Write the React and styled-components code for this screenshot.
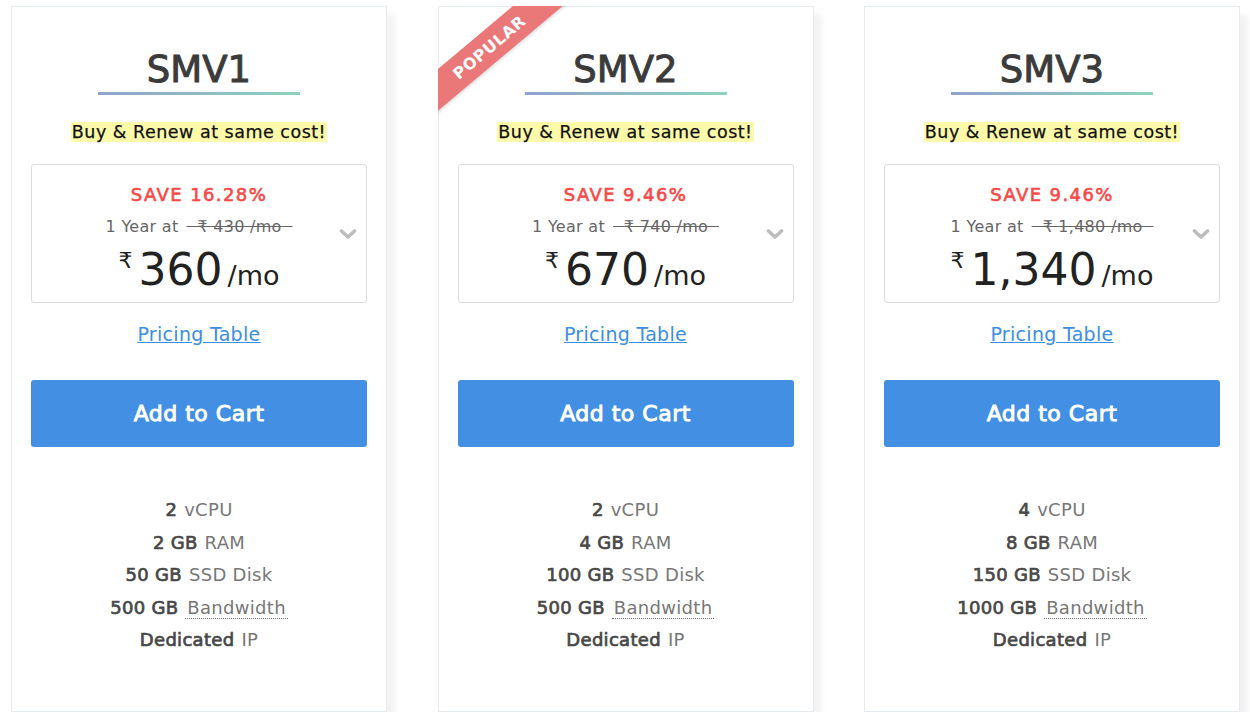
import React from 'react';
import styled, { createGlobalStyle } from 'styled-components';

const GlobalStyle = createGlobalStyle`
  html, body {
    margin: 0;
    padding: 0;
    background: #fff;
  }

  body {
    font-family: "DejaVu Sans", "Liberation Sans", sans-serif;
  }
`

const Page = styled.div`
  display: grid;
  grid-template-columns: repeat(3, 376px);
  column-gap: 50.5px;
  padding: 6px 0 0 11px;
`

const Card = styled.div`
  position: relative;
  box-sizing: border-box;
  height: 706px;
  padding: 41px 19px 0;
  background: #fff;
  border: 1px solid #e5ebf1;
  box-shadow: 8px 8px 6px rgba(0, 0, 0, 0.05);
  display: flex;
  flex-direction: column;
  align-items: center;
`

const RibbonClip = styled.div`
  position: absolute;
  top: -1px;
  left: -1px;
  width: 140px;
  height: 120px;
  overflow: hidden;
  pointer-events: none;
`

const Ribbon = styled.div`
  position: absolute;
  left: -49px;
  top: 25px;
  width: 200px;
  height: 32px;
  background: #ea7878;
  color: #fff;
  transform: rotate(-40deg);
  text-align: center;
  font-size: 16px;
  font-weight: 700;
  line-height: 33px;
  letter-spacing: 0.6px;
  box-shadow: 0 2px 3px rgba(0, 0, 0, 0.12);
`

const Title = styled.h2`
  margin: 0;
  font-size: 37px;
  line-height: 44px;
  font-weight: 400;
  -webkit-text-stroke: 1px #3b3b3b;
  color: #3b3b3b;
`

const Underline = styled.div`
  width: 202px;
  height: 3px;
  background: linear-gradient(90deg, #8fa2cd, #8ed2bc);
`

const Tagline = styled.p`
  margin: 27px 0 0;
  font-size: 17.5px;
  line-height: 21px;
  letter-spacing: 0.5px;
  color: #111;
  -webkit-text-stroke: 0.25px #111;
`

const Highlight = styled.span`
  background: #fdfaaa;
  padding: 0 1px;
`

const PriceBox = styled.div`
  position: relative;
  box-sizing: border-box;
  width: 100%;
  height: 139px;
  margin-top: 21px;
  padding-top: 18px;
  border: 1px solid #dcdcdc;
  border-radius: 3px;
  display: flex;
  flex-direction: column;
  align-items: center;
`

const Save = styled.div`
  font-size: 18px;
  line-height: 24px;
  font-weight: 400;
  -webkit-text-stroke: 0.6px #f84848;
  letter-spacing: 1.4px;
  color: #f84848;
`

const YearLine = styled.div`
  margin-top: 9px;
  font-size: 16px;
  line-height: 22px;
  letter-spacing: 0.3px;
  color: #666;
`

/* old price, struck through a little past its text on both sides */
const Was = styled.s`
  margin-left: 8px;
`

const Price = styled.div`
  margin-top: 7px;
  display: flex;
  align-items: baseline;
  line-height: 50px;
  color: #222;
`

const Rupee = styled.span`
  align-self: flex-start;
  margin: 5px 6px 0 0;
  font-size: 22px;
  line-height: 22px;
`

const Amount = styled.span`
  font-size: 44px;
`

const PerMonth = styled.span`
  margin-left: 5px;
  font-size: 27px;
`

const Chevron = styled.svg`
  position: absolute;
  right: 9px;
  top: 50%;
  transform: translateY(-50%);
`

const TableLink = styled.a`
  margin-top: 19px;
  font-size: 19px;
  line-height: 24px;
  letter-spacing: 0.3px;
  color: #3d8ee3;
  text-decoration: underline;
  cursor: pointer;
`

const CartButton = styled.button`
  margin-top: 34px;
  width: 100%;
  height: 67px;
  border: 0;
  border-radius: 3px;
  background: #428fe3;
  color: #fff;
  font-family: inherit;
  font-size: 22px;
  letter-spacing: 0.5px;
  font-weight: 400;
  -webkit-text-stroke: 0.9px #fff;
  cursor: pointer;
`

const Features = styled.ul`
  list-style: none;
  margin: 47px 0 0;
  padding: 0;
  text-align: center;
  font-size: 18px;
  line-height: 32.5px;
  letter-spacing: 0.3px;
  color: #777;
`

const Spec = styled.strong`
  margin-right: 7px;
  font-weight: 400;
  -webkit-text-stroke: 0.7px #484848;
  color: #484848;
`

const Dotted = styled.span`
  padding: 0 2px;
  border-bottom: 1px dotted #777;
`

const plans = [
  { name: 'SMV1', save: '16.28%', was: '430', price: '360', cpu: '2', ram: '2 GB', disk: '50 GB', bw: '500 GB' },
  { name: 'SMV2', popular: true, save: '9.46%', was: '740', price: '670', cpu: '2', ram: '4 GB', disk: '100 GB', bw: '500 GB' },
  { name: 'SMV3', save: '9.46%', was: '1,480', price: '1,340', cpu: '4', ram: '8 GB', disk: '150 GB', bw: '1000 GB' },
]

const PlanCard = ({ plan }) => (
  <Card>
    {plan.popular && (
      <RibbonClip>
        <Ribbon>POPULAR</Ribbon>
      </RibbonClip>
    )}
    <Title>{plan.name}</Title>
    <Underline />
    <Tagline>
      <Highlight>Buy &amp; Renew at same cost!</Highlight>
    </Tagline>
    <PriceBox>
      <Save>SAVE {plan.save}</Save>
      <YearLine>
        1 Year at
        <Was>{'\u00a0\u00a0₹ ' + plan.was + ' /mo\u00a0\u00a0'}</Was>
      </YearLine>
      <Price>
        <Rupee>₹</Rupee>
        <Amount>{plan.price}</Amount>
        <PerMonth>/mo</PerMonth>
      </Price>
      <Chevron width="18" height="11" viewBox="0 0 18 11">
        <path d="M2.5 2.5l6.5 6 6.5-6" stroke="#bdbdbd" strokeWidth="3.6" fill="none" strokeLinecap="round" strokeLinejoin="round" />
      </Chevron>
    </PriceBox>
    <TableLink>Pricing Table</TableLink>
    <CartButton>Add to Cart</CartButton>
    <Features>
      <li><Spec>{plan.cpu}</Spec>vCPU</li>
      <li><Spec>{plan.ram}</Spec>RAM</li>
      <li><Spec>{plan.disk}</Spec>SSD Disk</li>
      <li><Spec>{plan.bw}</Spec><Dotted>Bandwidth</Dotted></li>
      <li><Spec>Dedicated</Spec>IP</li>
    </Features>
  </Card>
)

export default function App() {
  return (
    <>
      <GlobalStyle />
      <Page>
        {plans.map((plan) => (
          <PlanCard key={plan.name} plan={plan} />
        ))}
      </Page>
    </>
  )
}
